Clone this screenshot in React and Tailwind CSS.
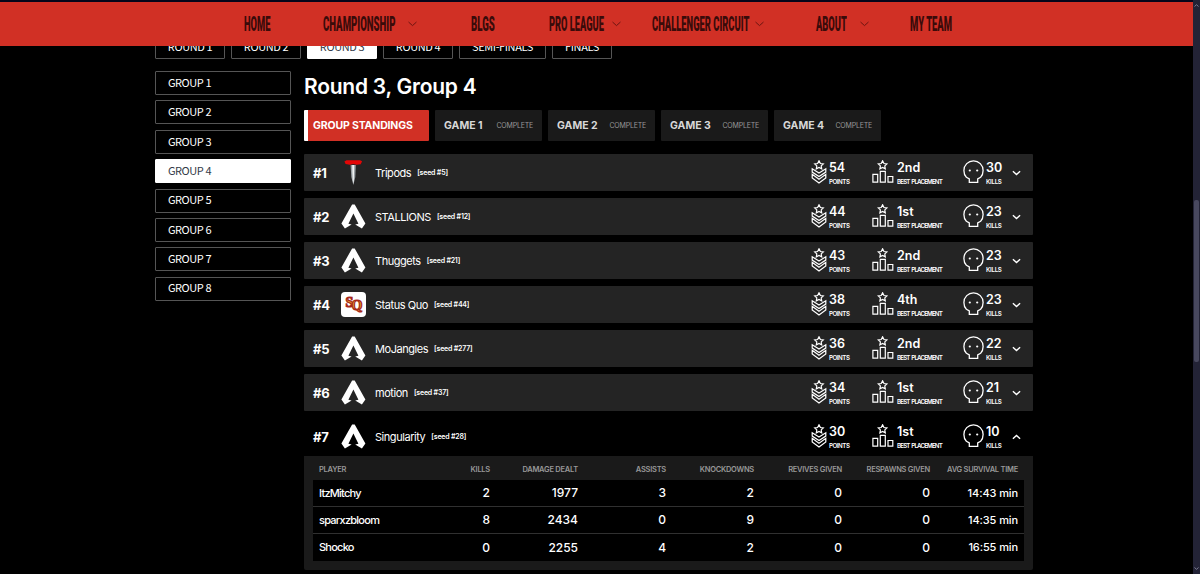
const NAV_ITEMS = [
  { label: "HOME", left: "ml-[244px] w-[79px]", scale: "scale-x-[0.455]" },
  { label: "CHAMPIONSHIP", left: "w-[84px]", scale: "scale-x-[0.468]", after: "w-[64px]" },
  { label: "BLGS", left: "w-[78px]", scale: "scale-x-[0.47]" },
  { label: "PRO LEAGUE", left: "w-[62px]", scale: "scale-x-[0.452]", after: "w-[41px]" },
  { label: "CHALLENGER CIRCUIT", left: "w-[102px]", scale: "scale-x-[0.457]", after: "w-[62px]" },
  { label: "ABOUT", left: "w-[43px]", scale: "scale-x-[0.455]", after: "w-[51px]" },
  { label: "MY TEAM", left: "w-[60px]", scale: "scale-x-[0.46]" },
];

const ROUNDS = [
  { label: "ROUND 1", width: "w-[70px]" },
  { label: "ROUND 2", width: "w-[70px]" },
  { label: "ROUND 3", width: "w-[70px]", active: true },
  { label: "ROUND 4", width: "w-[70px]" },
  { label: "SEMI-FINALS", width: "w-[87px]" },
  { label: "FINALS", width: "w-[60px]" },
];

const GROUPS = [1, 2, 3, 4, 5, 6, 7, 8];
const GAMES = [1, 2, 3, 4];

const TEAMS = [
  { rank: 1, name: "Tripods", seed: 5, points: 54, place: "2nd", kills: 30, logo: "tripods" },
  { rank: 2, name: "STALLIONS", seed: 12, points: 44, place: "1st", kills: 23 },
  { rank: 3, name: "Thuggets", seed: 21, points: 43, place: "2nd", kills: 23 },
  { rank: 4, name: "Status Quo", seed: 44, points: 38, place: "4th", kills: 23, logo: "statusquo" },
  { rank: 5, name: "MoJangles", seed: 277, points: 36, place: "2nd", kills: 22 },
  { rank: 6, name: "motion", seed: 37, points: 34, place: "1st", kills: 21 },
  { rank: 7, name: "Singularity", seed: 28, points: 30, place: "1st", kills: 10, open: true },
];

const COLUMNS = [
  "PLAYER",
  "KILLS",
  "DAMAGE DEALT",
  "ASSISTS",
  "KNOCKDOWNS",
  "REVIVES GIVEN",
  "RESPAWNS GIVEN",
  "AVG SURVIVAL TIME",
];

const PLAYERS = [
  ["ItzMitchy", "2", "1977", "3", "2", "0", "0", "14:43 min"],
  ["sparxzbloom", "8", "2434", "0", "9", "0", "0", "14:35 min"],
  ["Shocko", "0", "2255", "4", "2", "0", "0", "16:55 min"],
];

const Chevron = ({ className, up }) => (
  <svg className={className} viewBox="0 0 10 6" fill="none" stroke="currentColor">
    <path d={up ? "M1 5 5 1.4 9 5" : "M1 1 5 4.6 9 1"} />
  </svg>
);

const ApexLogo = () => (
  <svg className="w-[25px] h-[25px]" viewBox="0 0 25 25" fill="#fff">
    <path d="M11.1.4h2.6L24.4 19.6 20.9 24.6 14.2 20.4 17.4 19.8 12.4 9.6 7.4 19.8 10.6 20.4 3.9 24.6.4 19.6Z" />
  </svg>
);

const TripodsLogo = () => (
  <svg className="w-[25px] h-[25px]" viewBox="0 0 25 25">
    <path d="M9.6 5h5.2l-.5 12-2 8-2-8Z" fill="#9aa0a4" />
    <path d="M11.2 5h2l-.4 16-.5 3-.6-4Z" fill="#f1f3f4" />
    <path d="M3.4 1.4 5.5.2h13.6l2 1-1.4 3-4.2.6-3.3-.7-3.2.7-4.4-.8Z" fill="#e30606" />
  </svg>
);

const StatusQuoLogo = () => (
  <svg className="w-[25px] h-[25px]" viewBox="0 0 25 25">
    <rect width="25" height="25" rx="4" fill="#fff" />
    <g
      fill="#e09a2a"
      stroke="#a8281b"
      strokeWidth="1.2"
      fontFamily="Liberation Serif, serif"
      fontWeight="700"
      fontSize="14"
    >
      <text x="4.5" y="14.5">S</text>
      <text x="10.5" y="18">Q</text>
    </g>
  </svg>
);

const TeamLogo = ({ logo }) => {
  if (logo === "tripods") return <TripodsLogo />;
  if (logo === "statusquo") return <StatusQuoLogo />;
  return <ApexLogo />;
};

const STAR = "m8 .8 1.4 2.7 2.9.4-2.1 2 .5 2.9L8 7.4 5.3 8.8l.5-2.9-2.1-2 2.9-.4Z";

const PointsIcon = () => (
  <svg className="w-4 h-6" viewBox="0 0 16 24" fill="none" stroke="#fff" strokeWidth="1.2">
    <path d={STAR} />
    <path d="M1.2 8.8 8 13l6.8-4.2v3.3L8 16.5l-6.8-4.4Z" />
    <path d="M1.2 14.3 8 19.2l6.8-4.9v3.6L8 22.9l-6.8-5Z" />
  </svg>
);

const PlacementIcon = () => (
  <svg className="w-[22px] h-6" viewBox="0 0 22 24" fill="none" stroke="#fff" strokeWidth="1.2">
    <path d={STAR} transform="translate(2.6 0)" />
    <path d="M.9 14.3h4.8v7.8H.9ZM8.3 11.3h5v10.8h-5ZM16 16.5h4.8v5.6H16Z" />
  </svg>
);

const SkullIcon = () => (
  <svg className="w-[21px] h-6" viewBox="0 0 21 24" fill="none" stroke="#fff" strokeWidth="1.3">
    <path d="M6.3 22.3V18.8L3.4 17.3C1.7 15.5.9 13 .9 10.4a9.6 9.6 0 0 1 19.2 0c0 2.6-.8 5.1-2.5 6.9L14.7 18.8V22.3Z" />
    <circle cx="6.8" cy="10.5" r="1.1" fill="#fff" stroke="none" />
    <circle cx="14.2" cy="10.5" r="1.1" fill="#fff" stroke="none" />
  </svg>
);

const Stat = ({ icon, value, label, className, labelClass }) => (
  <div className={`flex shrink-0 pb-px ${className}`}>
    {icon}
    <div className="h-6 whitespace-nowrap">
      <div className="text-[12.5px] leading-[15px] font-semibold">{value}</div>
      <div className={`pt-px text-[6.2px] leading-[11px] font-semibold ${labelClass}`}>{label}</div>
    </div>
  </div>
);

const TeamRow = ({ team }) => (
  <div
    className={`flex items-center pl-[9px] rounded-[1px] ${
      team.open ? "h-[38px] pb-px bg-black" : "h-[37px] bg-[#242424] mb-[7px]"
    }`}
  >
    <div className="w-7 pt-[2px] text-[13px] font-bold tracking-[-0.2px]">#{team.rank}</div>
    <TeamLogo logo={team.logo} />
    <div className="flex items-center flex-1 pt-[2px] pl-[9px]">
      <span className="text-[11px] tracking-[-0.45px]">{team.name}</span>
      <span className="pl-[6px] text-[7px] font-semibold tracking-[-0.2px]">[seed #{team.seed}]</span>
    </div>
    <Stat
      className="w-[61px] gap-[2px]"
      icon={<PointsIcon />}
      value={team.points}
      label="POINTS"
      labelClass="tracking-[-0.45px]"
    />
    <Stat
      className="w-[91px] gap-[3px]"
      icon={<PlacementIcon />}
      value={team.place}
      label="BEST PLACEMENT"
      labelClass="tracking-[-0.85px] [word-spacing:1px]"
    />
    <Stat
      className="w-[49px] gap-[2px]"
      icon={<SkullIcon />}
      value={team.kills}
      label="KILLS"
      labelClass="tracking-[-0.3px]"
    />
    <Chevron className="w-[9px] h-[6px] mr-[12px] stroke-[1.6]" up={team.open} />
  </div>
);

const cellClass = (i) => {
  if (i === 0) return "pl-[6px] text-[11px] tracking-[-0.75px]";
  if (i === COLUMNS.length - 1) return "pr-[6px] text-right text-[11px] tracking-[-0.1px]";
  return "pr-[6px] text-right text-[12px]";
};

const PlayerTable = () => (
  <div className="h-[114px] px-[9px] bg-[#1a1a1a] rounded-b-[2px] whitespace-nowrap">
    <div className="grid grid-cols-[95px_repeat(7,88px)] h-6 items-center pt-[3px] text-[7.5px] font-semibold tracking-[-0.25px] text-[#989898]">
      {COLUMNS.map((column, i) => (
        <div key={column} className={i === 0 ? "pl-[6px]" : "flex justify-end pr-[6px]"}>
          {column}
        </div>
      ))}
    </div>
    <div className="bg-black divide-y divide-[#303030]">
      {PLAYERS.map((player) => (
        <div
          key={player[0]}
          className="grid grid-cols-[95px_repeat(7,88px)] h-[27px] items-center font-medium"
        >
          {player.map((cell, i) => (
            <div key={i} className={cellClass(i)}>
              {cell}
            </div>
          ))}
        </div>
      ))}
    </div>
  </div>
);

const Navbar = () => (
  <nav className="flex items-center h-11 bg-[#d13025] text-[#3a0b0a] font-['Roboto',sans-serif]">
    {NAV_ITEMS.map((item) => (
      <div key={item.label} className="flex items-center shrink-0">
        <div className={`${item.left} whitespace-nowrap text-[20.5px] font-black`}>
          <span className={`inline-block origin-left ${item.scale}`}>{item.label}</span>
        </div>
        {item.after && (
          <div className={item.after}>
            <Chevron className="w-[11px] h-[6px] stroke-[1] text-[#6d1511]" />
          </div>
        )}
      </div>
    ))}
  </nav>
);

const Scrollbar = () => (
  <div className="flex flex-col items-center justify-between w-[7px] h-full py-1 bg-[#232336] text-[#7c7c92]">
    <Chevron className="w-[5px] h-[3px] stroke-2" up />
    <div className="w-[5px] h-[162px] mb-[12px] rounded-[2px] bg-[#48485e]" />
    <Chevron className="w-[5px] h-[3px] stroke-2" />
  </div>
);

const App = () => {
  return (
    <div className="flex w-[1200px] h-[574px] overflow-hidden bg-black text-white font-['Inter',sans-serif]">
      <div className="w-[1193px] border-t-2 border-[#05051a]">
        <Navbar />

        {/* round tabs, scrolled partly under the navbar */}
        <div className="flex items-end gap-[6px] h-[13px] pl-[155px] overflow-hidden font-['Noto_Sans_CJK_SC',sans-serif]">
          {ROUNDS.map((round) => (
            <div
              key={round.label}
              className={`flex items-center justify-center shrink-0 h-6 pb-px rounded-[1px] border text-[11px] tracking-[-0.4px] ${round.width} ${
                round.active ? "bg-white border-white text-[#333a48]" : "border-[#555]"
              }`}
            >
              {round.label}
            </div>
          ))}
        </div>

        <div className="flex gap-[13px] pt-3 pl-[155px]">
          <aside className="flex flex-col gap-[5.4px] w-[136px] shrink-0 font-['Noto_Sans_CJK_SC',sans-serif]">
            {GROUPS.map((group) => (
              <div
                key={group}
                className={`flex items-center h-6 pl-3 pb-[2px] rounded-[1px] border text-[11px] tracking-[-0.5px] [word-spacing:0.5px] ${
                  group === 4 ? "bg-white border-white text-[#333a48]" : "border-[#555]"
                }`}
              >
                GROUP {group}
              </div>
            ))}
          </aside>

          <main className="w-[729px]">
            <h1 className="h-[39px] pt-px text-[21px] leading-[30px] font-semibold tracking-[-0.25px]">
              Round 3, Group 4
            </h1>

            <div className="flex gap-[6px] h-[31px] mb-[13px] whitespace-nowrap">
              <div className="flex items-center w-[125px] pt-px pl-[5px] rounded-[1px] border-l-4 border-white bg-[#d13025] text-[10.5px] font-bold tracking-[-0.15px]">
                GROUP STANDINGS
              </div>
              {GAMES.map((game) => (
                <div
                  key={game}
                  className="flex items-center justify-between w-[107px] pt-px px-[9px] rounded-[1px] bg-[#1a1a1a]"
                >
                  <span className="text-[10.5px] font-bold text-[#d8d8d8]">GAME {game}</span>
                  <span className="text-[7px] text-[#989898] tracking-[-0.2px]">COMPLETE</span>
                </div>
              ))}
            </div>

            {TEAMS.map((team) => (
              <TeamRow key={team.rank} team={team} />
            ))}
            <PlayerTable />
          </main>
        </div>
      </div>
      <Scrollbar />
    </div>
  );
};

export default App;
